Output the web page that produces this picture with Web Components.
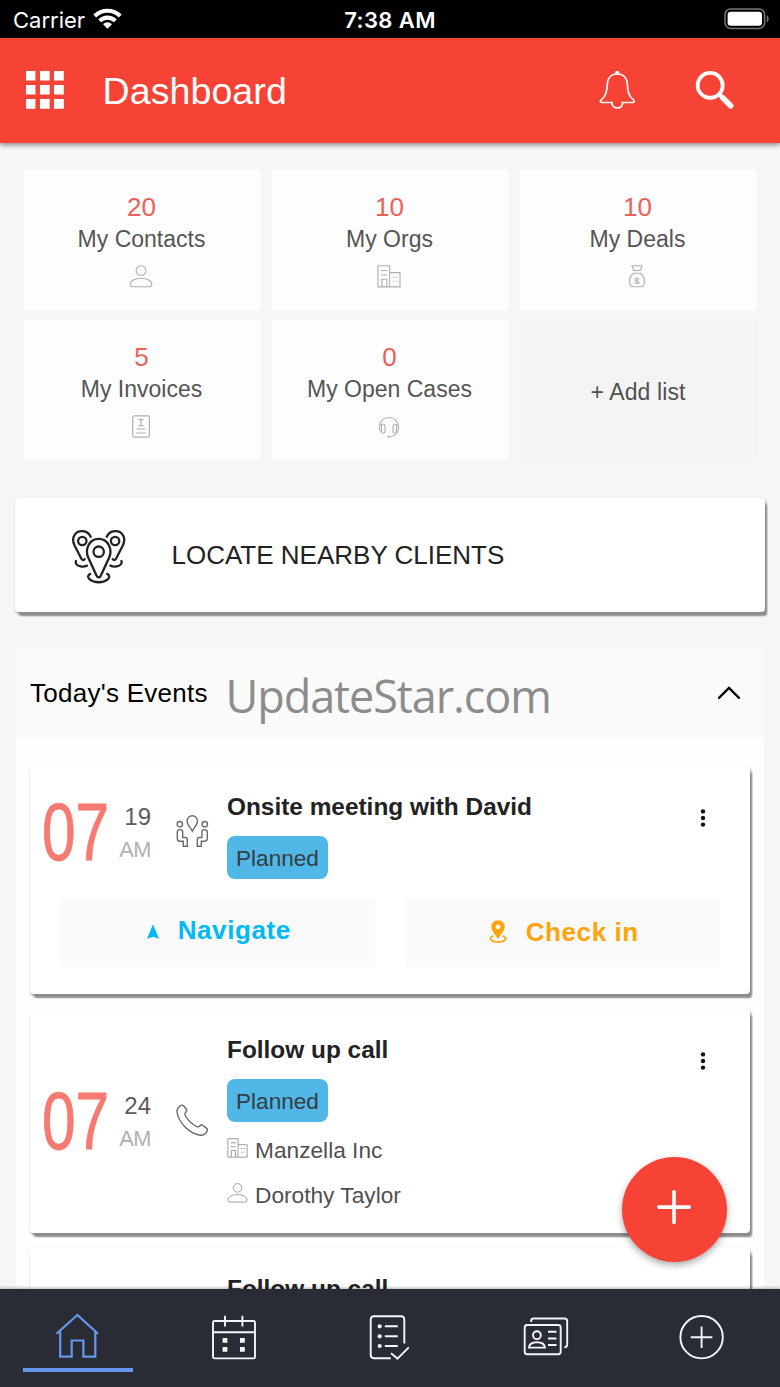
<!DOCTYPE html>
<html lang="en">
<head>
<meta charset="utf-8">
<meta name="viewport" content="width=device-width, initial-scale=1">
<title>Dashboard</title>
<style>
*{box-sizing:border-box}
html,body{margin:0;padding:0}
body{width:780px;height:1387px;overflow:hidden;background:#f6f6f6;font-family:"Liberation Sans",Arial,sans-serif;color:#222}
</style>
</head>
<body>
<app-shell>
<status-bar slot="top" carrier="Carrier" time="7:38 AM"></status-bar>
<app-header slot="top">Dashboard</app-header>

<stat-grid>
<stat-tile count="20" icon="person">My Contacts</stat-tile>
<stat-tile count="10" icon="org">My Orgs</stat-tile>
<stat-tile count="10" icon="deal">My Deals</stat-tile>
<stat-tile count="5" icon="invoice">My Invoices</stat-tile>
<stat-tile count="0" icon="headset">My Open Cases</stat-tile>
<add-tile>+ Add list</add-tile>
</stat-grid>

<locate-card>LOCATE NEARBY CLIENTS</locate-card>

<event-section heading="Today's Events" mark="UpdateStar.com">
<event-card hour="07" minute="19" half="AM" icon="meeting" heading="Onsite meeting with David" state="Planned">
<action-button slot="actions" icon="navigate" style="--tint:#00b9f5;--shift:-4px">Navigate</action-button>
<action-button slot="actions" icon="checkin" style="--tint:#ffa40b;--shift:0px">Check in</action-button>
</event-card>
<event-card hour="07" minute="24" half="AM" icon="phone" heading="Follow up call" state="Planned">
<related-row icon="org">Manzella Inc</related-row>
<related-row icon="person">Dorothy Taylor</related-row>
</event-card>
<event-card icon="phone" heading="Follow up call"></event-card>
</event-section>

<fab-button slot="float"></fab-button>
<tab-bar slot="bottom">
<tab-item icon="home" active></tab-item>
<tab-item icon="calendar"></tab-item>
<tab-item icon="tasks"></tab-item>
<tab-item icon="cards"></tab-item>
<tab-item icon="more"></tab-item>
</tab-bar>
</app-shell>

<script>
// [width, height, stroke width, markup]
const ICONS = {
wifi:[30,22,0,`<g fill="none" stroke="currentColor" stroke-width="4.2"><path d="M1.8 8.3a18.6 18.6 0 0 1 26.4 0"/><path d="M6.9 13.3a11.5 11.5 0 0 1 16.2 0"/></g><path fill="currentColor" d="M15 21.4l-4.6-4.7a6.6 6.6 0 0 1 9.2 0z"/>`],
battery:[46,22,0,`<rect x="1" y="1" width="39.6" height="19.4" rx="5.5" fill="none" stroke="#777" stroke-width="1.5"/><rect x="3.6" y="3.8" width="34.4" height="14" rx="3.2" fill="#fff"/><path d="M42.8 7.2c2.4.8 2.4 6.4 0 7.2z" fill="#777"/>`],
apps:[40,40,0,`<g fill="currentColor"><path d="M1 0h9.4v9.4H1zM15 0h9.6v9.4H15zM29 0h9.8v9.4H29zM1 14h9.4v9.6H1zM15 14h9.6v9.6H15zM29 14h9.8v9.6H29zM1 28h9.4v9.8H1zM15 28h9.6v9.8H15zM29 28h9.8v9.8H29z"/></g>`],
bell:[37,40,1.7,`<path d="M18.3 3c6.3 0 9.7 4.400 10 10 .2 7.300 1.200 12.200 6.400 16.200 1 .9.500 2.300-1 2.300H23.500c.4 3.800-2.200 5.500-5.200 5.500s-5.600-1.700-5.200-5.500H2.900c-1.500 0-2-1.400-1-2.300 5.200-4 6.200-8.900 6.400-16.200.3-5.600 3.700-10 10-10z"/><circle cx="18.3" cy="1.900" r="1.300" fill="currentColor"/>`],
search:[40,40,3.8,`<circle cx="15.200" cy="14.400" r="12.500"/><path d="M24.500 23.500l3 3" stroke-width="4"/><path d="M27.700 26.800l8 8" stroke-width="5.600" stroke-linecap="round"/>`],
person:[24,24,1.1,`<circle cx="12" cy="5.600" r="4.900"/><path d="M1.200 19.600c0-3.900 4.900-6.400 10.800-6.400s10.800 2.500 10.800 6.400c0 1.500-.9 2.200-2.200 2.200H3.400c-1.300 0-2.200-.7-2.200-2.200z"/>`],
org:[24,24,1.1,`<path d="M12.600 21.900H1V.8h11.600v21.100H23V7.600H12.600M4.900 21.900v-7.600h4.900v7.600M4 5.500h6.200M4 10h6.200M15.800 12.200h1.500M18.800 12.200h1.500M15.800 16.200h1.500M18.800 16.200h1.500"/>`],
deal:[24,24,1.1,`<path d="M7 .8h10l-1.700 4.700H8.700zM8.800 8.300h6.400c2.600 1.900 4.300 5 4.300 8 0 3.500-1.700 5.500-4.300 5.500H8.800c-2.600 0-4.300-2-4.300-5.500 0-3 1.700-6.100 4.300-8z"/><text x="12" y="18.500" text-anchor="middle" font-size="9.500" font-weight="700" fill="currentColor" stroke="none">$</text>`],
invoice:[24,24,1.200,`<rect x="3.700" y=".9" width="16.700" height="21.200" rx="1.500"/><path d="M9.500 4.700h5M12 4.700v5.800M9.500 10.500h5M7.500 14h9M7.500 18h9"/>`],
headset:[24,24,1.1,`<path d="M2.500 13.500a9.600 9.600 0 1 1 19 0M2.500 13.500c-.4-2 .6-3.600 2-4M21.500 13.500c.4-2-.6-3.600-2-4M2.500 13.500c.2 1.800 1 3 2 3.300M21.500 13.500c-.8 4.500-3.800 7.500-7.500 8"/><rect x="4.500" y="9.300" width="3.500" height="9" rx="1.600"/><rect x="16" y="9.300" width="3.500" height="9" rx="1.600"/><path d="M10.500 21.600h3" stroke-width="1.800"/>`],
locate:[56,56,2.3,`<g stroke-linecap="round"><path d="M27.700 48.400c-1 0-1.700-.8-2.200-1.900L17.200 28.500C13.700 20.500 18 9.900 27.700 9.900s14 10.600 10.500 18.600l-8.300 18c-.5 1.100-1.200 1.900-2.200 1.900z"/><circle cx="27.700" cy="22.700" r="5.200"/><path d="M19.200 44.900c-2.500 1.200-2.800 3.600-.6 5.500 4.500 3.800 13.700 3.800 18.200 0 2.200-1.900 1.900-4.300-.6-5.500"/><circle cx="11.300" cy="12" r="4.200"/><path d="M19.700 7.700C16.500.6 7 .4 3.600 5.900c-2.300 3.500-1.800 7 .1 10.900l6.700 13c.8 1.600 2.400 1.700 3.300.4M5 32c-1 2.500.8 4.700 4.700 5.400 2 .4 4.400.1 6.300-.8"/><circle cx="44.100" cy="12" r="4.200"/><path d="M35.700 7.700C38.900.6 48.400.4 51.800 5.900c2.300 3.500 1.800 7-.1 10.900l-6.700 13c-.8 1.600-2.400 1.700-3.300.4M50.400 32c1 2.500-.8 4.700-4.700 5.400-2 .4-4.400.1-6.300-.8"/></g>`],
chevron:[24,14,2.200,`<path d="M2 11.900L12 1.900l10 10" stroke-linecap="round"/>`],
dots:[6,20,0,`<g fill="#111"><circle cx="3" cy="3.400" r="2.200"/><circle cx="3" cy="10" r="2.200"/><circle cx="3" cy="16.600" r="2.200"/></g>`],
meeting:[33,33,1.400,`<path d="M16.300 16.200c-1.600-3.400-5.200-6.400-5.200-10.200a5.200 5.200 0 0 1 10.400 0c0 3.800-3.600 6.800-5.200 10.200z"/><circle cx="3.800" cy="9.200" r="2.700"/><circle cx="28.800" cy="9.200" r="2.700"/><path d="M4 14.600c-1.600 0-2.700 1-2.700 2.500v6.400c0 1.700 1 2.700 2.700 2.700h3.300v5h4v-6.800c0-1.200-.6-1.900-1.800-1.900H6.700v-5.400c0-1.500-1.100-2.500-2.700-2.500zM28.600 14.600c1.600 0 2.700 1 2.700 2.500v6.400c0 1.700-1 2.700-2.700 2.700h-3.300v5h-4v-6.800c0-1.200.6-1.900 1.800-1.900h2.800v-5.400c0-1.500 1.100-2.500 2.700-2.500z"/>`],
phone:[33,33,1.400,`<path d="M4.300 1.800c1.300-1 2.700-.7 3.700.5l2 2.500c1 1.300.9 2.500-.2 3.500-1.100.9-1.300 1.900-.6 3.200 2.600 4.800 6.400 8.400 11.200 11 1.300.7 2.300.5 3.200-.5 1-1.200 2.200-1.200 3.500-.3l3 2.200c1.500 1.100 1.700 2.400.7 3.700-1.600 2.700-3.600 4-6.500 3.600C12.500 29.500 2 17.500 1 7.800.8 5.200 2.200 3.200 4.300 1.800z"/>`],
navigate:[12,16,0,`<path fill="currentColor" d="M6 .2l6 14.600-6-2-6 2z"/>`],
checkin:[18,24,0,`<path fill="currentColor" fill-rule="evenodd" d="M9 .3c4 0 6.700 3 6.700 6.500 0 3.900-3.800 7.400-6.700 12.200C6.100 14.200 2.300 10.700 2.300 6.800 2.300 3.300 5 .3 9 .3zm0 4.200a2.400 2.400 0 1 0 0 4.800 2.400 2.400 0 0 0 0-4.800z"/><path d="M4.300 15.900c-4.600 1.500-4.200 5.900 4.700 6.200 8.900-.3 9.300-4.700 4.700-6.200" fill="none" stroke="currentColor" stroke-width="1.800"/>`],
home:[48,48,2.2,`<path d="M2.500 20.800L23.400 2 44 20.800" stroke-width="2.200"/><path d="M6.200 18.500v25.100h11.500V27.500h11.700v16.100h11.900V18.500"/>`],
calendar:[48,48,1.900,`<rect x="3" y="8" width="42" height="37.400" rx="1.500"/><path d="M3 19.200h42M15 2.700v10.700M32.400 2.700v10.700"/><path fill="currentColor" stroke="none" d="M12.600 25h4.800v4.800h-4.800zM30 25h4.800v4.800H30zM12.600 34h4.800v4.800h-4.800zM30 34h4.800v4.800H30z"/>`],
tasks:[48,48,1.900,`<path d="M38.300 30.500V6.400c0-2-1.100-3.100-3.100-3.100H7.800c-2 0-3.100 1.100-3.100 3.100v35.700c0 2 1.100 3.100 3.100 3.100h17M25 40.300l6.500 5.300 11.300-11.200M18.800 13.300h13M18.800 23.300h13M18.800 33h13"/><g fill="currentColor" stroke="none"><circle cx="13.700" cy="13.300" r="2.100"/><circle cx="13.700" cy="23.300" r="2.100"/><circle cx="13.700" cy="33" r="2.100"/></g>`],
cards:[48,48,1.900,`<rect x="2.700" y="12" width="36" height="29.200" rx="2.500"/><path d="M9.200 8.900V7.800c0-1.500.9-2.300 2.400-2.300h31c1.700 0 2.600.9 2.600 2.600v23.500c0 1.700-.9 2.700-2.800 2.800M26 18.800h8.500M26 25.500h8.500M26 32h8.500"/><circle cx="14.900" cy="22.200" r="3.900"/><path d="M7 34.600c.2-3.500 3.300-5.400 7.900-5.400s7.800 1.900 8 5.400z"/>`],
more:[48,48,1.900,`<circle cx="23.600" cy="24.200" r="21.200"/><path d="M23.600 13.500v21.600M12.800 24.200h21.600"/>`],
plus:[38,38,3.600,`<path d="M19 3.800v30.700M3.700 19.100h30.600" stroke-linecap="round"/>`]
};

const cardShadow = 'box-shadow:3px 5px 2px -1px #8c8c8c,1px 2px 3px rgba(0,0,0,.4);clip-path:inset(-3px -3px -5px -3px)';

class BaseElement extends HTMLElement{
connectedCallback(){
if(this.shadowRoot) return;
this.attachShadow({mode:'open'}).innerHTML = '<style>*{box-sizing:border-box}</style>' + this.render();
}
attr(name){
return this.getAttribute(name) || '';
}
}

class UiIcon extends BaseElement{
render(){
const [w,h,stroke,body] = ICONS[this.attr('name')];
const size = this.attr('size');
const width = size || w;
const height = size ? size * h / w : h;
return `
<style>
:host{display:block;flex:none}
svg{display:block;overflow:visible;font-family:"Liberation Sans",Arial,sans-serif}
</style>
<svg width="${width}" height="${height}" viewBox="0 0 ${w} ${h}" fill="none" stroke="${stroke ? 'currentColor' : 'none'}" stroke-width="${stroke}" aria-hidden="true">${body}</svg>
`;
}
}

class AppShell extends BaseElement{
render(){
return `
<style>
:host{display:flex;flex-direction:column;position:relative;width:780px;height:1387px;overflow:hidden;background:#f6f6f6}
.top{position:relative;z-index:2}
main{flex:1;min-height:0;overflow:hidden;padding:27px 0 0}
</style>
<div class="top"><slot name="top"></slot></div>
<main><slot></slot></main>
<slot name="bottom"></slot>
<slot name="float"></slot>
`;
}
}

class StatusBar extends BaseElement{
render(){
return `
<style>
:host{display:grid;grid-template-columns:1fr auto 1fr;align-items:center;height:38px;padding:2px 10px 0 13px;background:#000;color:#fff;font:22px/36px Inter,sans-serif}
.left{display:flex;align-items:center;gap:8px}
.left ui-icon{margin-top:-3px}
.time{font-weight:600;letter-spacing:.4px;margin-right:3px}
.right{justify-self:end;margin-top:-2px}
</style>
<div class="left"><span>${this.attr('carrier')}</span><ui-icon name="wifi" size="29"></ui-icon></div>
<div class="time">${this.attr('time')}</div>
<ui-icon class="right" name="battery"></ui-icon>
`;
}
}

class AppHeader extends BaseElement{
render(){
return `
<style>
:host{display:flex;align-items:center;height:105px;padding:0 45px 0 25px;background:#f64336;color:#fff;box-shadow:0 2px 5px rgba(0,0,0,.45)}
h1{flex:1;margin:0 0 0 37.5px;font-size:37.5px;line-height:44px;font-weight:400;letter-spacing:.1px}
.bell{margin-right:59px}
</style>
<ui-icon name="apps"></ui-icon>
<h1><slot></slot></h1>
<ui-icon class="bell" name="bell"></ui-icon>
<ui-icon name="search"></ui-icon>
`;
}
}

class StatGrid extends BaseElement{
render(){
return `
<style>
:host{display:grid;grid-template-columns:repeat(3,238px);grid-auto-rows:140px;gap:10px;margin-left:24px}
</style>
<slot></slot>
`;
}
}

class StatTile extends BaseElement{
render(){
return `
<style>
:host{display:flex;flex-direction:column;align-items:center;padding:21px 2px 0 0;margin-right:1px;background:#fdfdfd;color:#555;font-size:23px;line-height:32px}
b{font-weight:400;font-size:26px;color:#ec6059}
ui-icon{margin:10px 1px 0 0;color:#b0b0b0}
</style>
<b>${this.attr('count')}</b>
<span><slot></slot></span>
<ui-icon name="${this.attr('icon')}"></ui-icon>
`;
}
}

class AddTile extends BaseElement{
render(){
return `
<style>
:host{display:flex;align-items:center;justify-content:center;padding:4px 2px 0 0;background:#f4f4f4;color:#505050;font-size:23px;letter-spacing:.1px}
</style>
<slot></slot>
`;
}
}

class LocateCard extends BaseElement{
render(){
return `
<style>
:host{display:flex;align-items:center;gap:44.500px;width:750px;height:114px;margin:38px 0 36px 15px;padding-left:56px;border-radius:4px;background:#fff;font-size:26px;${cardShadow}}
ui-icon{padding-top:3px}
</style>
<ui-icon name="locate"></ui-icon>
<span><slot></slot></span>
`;
}
}

class EventSection extends BaseElement{
render(){
return `
<style>
:host{display:block;width:748px;margin-left:16px;background:#fefefe}
header{position:relative;display:flex;align-items:center;justify-content:space-between;height:89px;padding:0 23px 0 14px;background:#fafafa;color:#000}
h2{margin:0;padding-top:1px;font-size:26px;font-weight:400;letter-spacing:.26px}
/* the watermark lies over the heading bar */
.mark{position:absolute;left:209.500px;top:18px;font:45px/60px "Open Sans","Noto Sans",sans-serif;letter-spacing:-1.080px;color:#8c8c8c;white-space:nowrap}
.list{display:flex;flex-direction:column;gap:15px;padding:29px 14px}
</style>
<header><h2>${this.attr('heading')}</h2><span class="mark">${this.attr('mark')}</span><ui-icon name="chevron"></ui-icon></header>
<div class="list"><slot></slot></div>
`;
}
}

class EventCard extends BaseElement{
render(){
const hasActions = this.querySelector('[slot=actions]');
const state = this.attr('state');
return `
<style>
:host{display:block;border-radius:4px;background:#fff;${cardShadow}}
.row{display:grid;grid-template-columns:66px 43px 33px 1fr 6px;align-items:center;min-height:${hasActions ? 132 : 224}px;padding:0 44.500px 0 12px}
.hour{width:66px;font-size:81px;line-height:90px;color:#f67a71;-webkit-text-stroke:.9px currentColor}
.hour span{display:block;width:90px;transform:scaleX(.745);transform-origin:0 50%}
.clock{text-align:right;font-size:24px;line-height:33px;color:#5c5c5c;padding-top:2px}
.clock i{display:block;font-style:normal;font-size:21.800px;letter-spacing:-.5px;color:#b0b0b0}
.kind{margin:-2px 0 0 25px;color:#6a6a6a}
.info{align-self:start;padding:27px 0 0 43px}
h3{margin:0;font-size:24.4px;line-height:28px;font-weight:700}
.state{display:inline-block;vertical-align:top;height:43px;margin:15px 0 5px;padding:0 9px;border-radius:8px;background:#50b7e7;color:#353d42;font-size:22.600px;line-height:45px}
.menu{align-self:start;margin-top:42px}
.actions{display:grid;grid-template-columns:1fr 1fr;gap:30px;padding:0 30px 27px}
</style>
<div class="row">
<div class="hour"><span>${this.attr('hour')}</span></div>
<div class="clock">${this.attr('minute')}<i>${this.attr('half')}</i></div>
<ui-icon class="kind" name="${this.attr('icon')}"></ui-icon>
<div class="info">
<h3>${this.attr('heading')}</h3>
${state ? `<span class="state">${state}</span>` : ''}
<slot></slot>
</div>
<ui-icon class="menu" name="dots"></ui-icon>
</div>
${hasActions ? '<div class="actions"><slot name="actions"></slot></div>' : ''}
`;
}
}

class ActionButton extends BaseElement{
render(){
return `
<style>
:host{display:flex;align-items:center;justify-content:center;gap:18.500px;height:69px;padding-left:3px;background:#fafafa;color:var(--tint);font-size:26px;font-weight:700;letter-spacing:.6px}
ui-icon{margin-top:-1px}
span{padding-bottom:calc(var(--shift) * -1)}
</style>
<ui-icon name="${this.attr('icon')}"></ui-icon>
<span><slot></slot></span>
`;
}
}

class RelatedRow extends BaseElement{
render(){
return `
<style>
:host{display:flex;align-items:center;gap:7px;height:45px;color:#505050;font-size:22.700px}
span{padding-top:1px}
ui-icon{margin:-3px 0 0 0;color:#9c9c9c}
</style>
<ui-icon name="${this.attr('icon')}" size="21"></ui-icon>
<span><slot></slot></span>
`;
}
}

class FabButton extends BaseElement{
render(){
return `
<style>
:host{position:absolute;z-index:3;left:622px;top:1157px;display:flex;align-items:center;justify-content:center;width:105px;height:105px;padding:0 1px 6px 0;border-radius:50%;background:#f64336;color:#fff;box-shadow:0 3px 7px rgba(0,0,0,.35)}
</style>
<ui-icon name="plus"></ui-icon>
`;
}
}

class TabBar extends BaseElement{
render(){
return `
<style>
:host{position:relative;display:grid;grid-template-columns:repeat(5,1fr);height:98px;background:#2a2c35;box-shadow:0 -1px 3px rgba(0,0,0,.3)}
</style>
<slot></slot>
`;
}
}

class TabItem extends BaseElement{
render(){
return `
<style>
:host{display:flex;flex-direction:column;align-items:center;gap:7px;padding-top:24px;color:#f4f5fa}
:host([active]){color:#6697ee}
.bar{width:110px;height:4px}
:host([active]) .bar{background:currentColor}
</style>
<ui-icon name="${this.attr('icon')}"></ui-icon>
<div class="bar"></div>
`;
}
}

customElements.define('ui-icon', UiIcon);
customElements.define('app-shell', AppShell);
customElements.define('status-bar', StatusBar);
customElements.define('app-header', AppHeader);
customElements.define('stat-grid', StatGrid);
customElements.define('stat-tile', StatTile);
customElements.define('add-tile', AddTile);
customElements.define('locate-card', LocateCard);
customElements.define('event-section', EventSection);
customElements.define('event-card', EventCard);
customElements.define('action-button', ActionButton);
customElements.define('related-row', RelatedRow);
customElements.define('fab-button', FabButton);
customElements.define('tab-bar', TabBar);
customElements.define('tab-item', TabItem);
</script>
</body>
</html>
